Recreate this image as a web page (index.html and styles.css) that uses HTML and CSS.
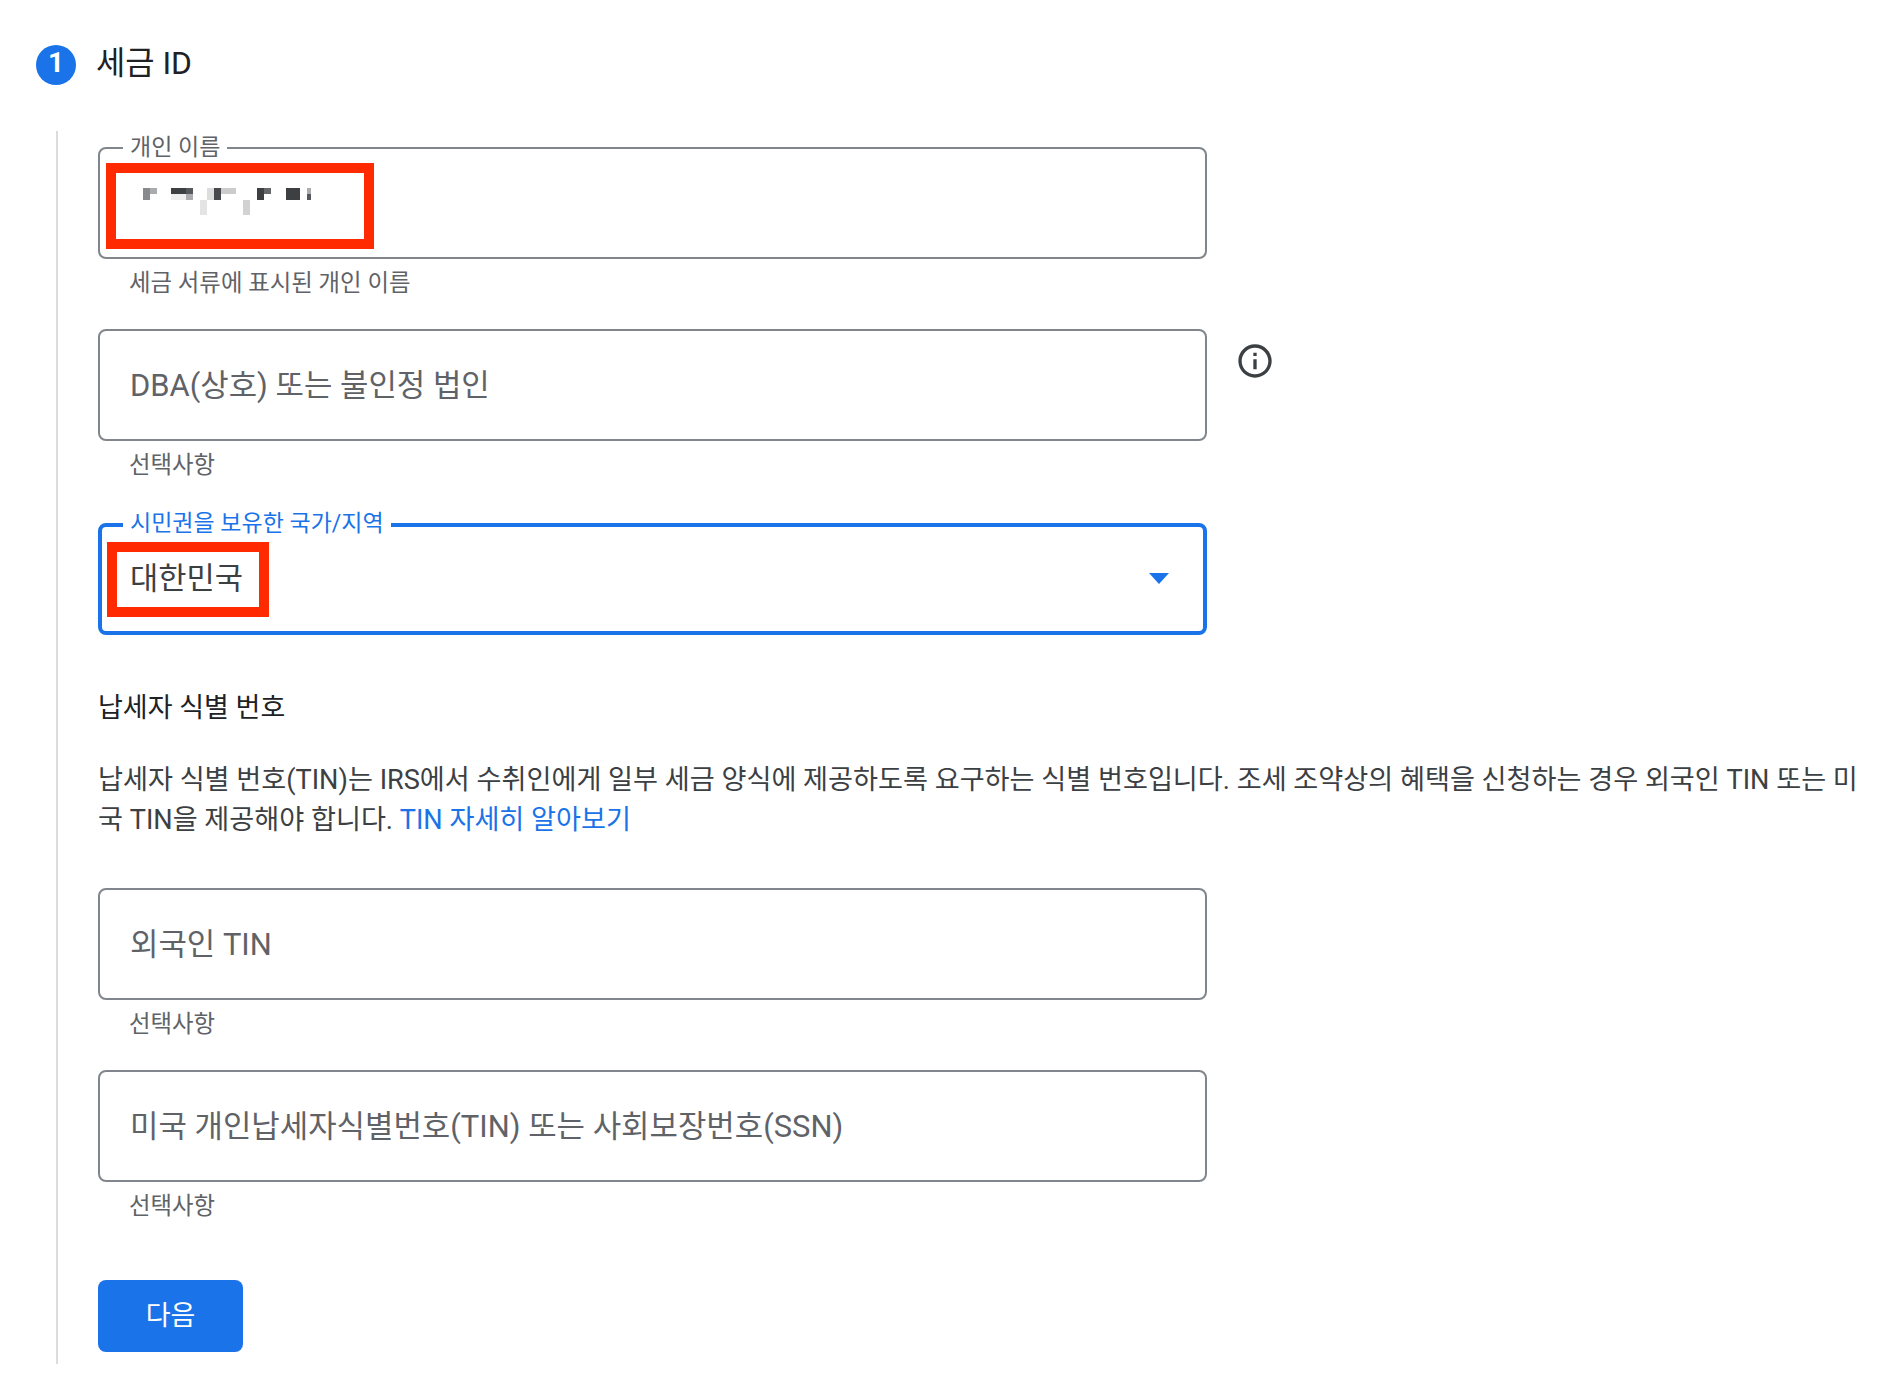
FILE: index.html
```html
<!DOCTYPE html>
<html lang="ko">
<head>
  <meta charset="UTF-8">
  <title>세금 ID</title>
  <link rel="stylesheet" href="styles.css">
</head>
<body>
  <div class="step-head">
    <span class="step-num">1</span>
    <h1>세금 ID</h1>
  </div>

  <div class="step-body">
    <div class="row row-first">
      <div class="field">
        <span class="float-label">개인 이름</span>
        <div class="redact redact-name">
          <svg class="pixels" width="170" height="30" viewBox="143 188 170 30">
            <rect x="143" y="188" width="7" height="12" fill="#888a8d"/>
            <rect x="150" y="188" width="7" height="6" fill="#a9abae"/>
            <rect x="171" y="188" width="15" height="6" fill="#3c4043"/>
            <rect x="186" y="188" width="7" height="6" fill="#55585c"/>
            <rect x="171" y="194" width="15" height="6" fill="#eeeeee"/>
            <rect x="186" y="194" width="7" height="6" fill="#aaacaf"/>
            <rect x="200" y="200" width="7" height="15" fill="#e4e4e4"/>
            <rect x="207" y="188" width="7" height="12" fill="#dddddd"/>
            <rect x="214" y="188" width="7" height="12" fill="#47494d"/>
            <rect x="221" y="188" width="15" height="6" fill="#cccccc"/>
            <rect x="243" y="200" width="7" height="15" fill="#d2d2d2"/>
            <rect x="257" y="188" width="7" height="12" fill="#3c4043"/>
            <rect x="264" y="188" width="7" height="6" fill="#66696c"/>
            <rect x="286" y="188" width="14" height="12" fill="#3c4043"/>
            <rect x="307" y="188" width="4" height="6" fill="#aaacaf"/>
            <rect x="307" y="194" width="4" height="6" fill="#55585c"/>
          </svg>
        </div>
      </div>
    </div>
    <div class="helper">세금 서류에 표시된 개인 이름</div>

    <div class="row">
      <div class="field">
        <span class="placeholder">DBA(상호) 또는 불인정 법인</span>
      </div>
      <svg class="info" width="40" height="40" viewBox="0 0 24 24">
        <path d="M11 7h2v2h-2zm0 4h2v6h-2zm1-9C6.48 2 2 6.48 2 12s4.480 10 10 10 10-4.480 10-10S17.520 2 12 2zm0 18c-4.410 0-8-3.590-8-8s3.590-8 8-8 8 3.590 8 8-3.590 8-8 8z"/>
      </svg>
    </div>
    <div class="helper helper-tall">선택사항</div>

    <div class="row">
      <div class="field field-focus">
        <span class="float-label">시민권을 보유한 국가/지역</span>
        <span class="value">대한민국</span>
        <div class="redact redact-country"></div>
        <span class="arrow"></span>
      </div>
    </div>

    <h2>납세자 식별 번호</h2>
    <p class="desc">납세자 식별 번호(TIN)는 IRS에서 수취인에게 일부 세금 양식에 제공하도록 요구하는 식별 번호입니다. 조세 조약상의 혜택을 신청하는 경우 외국인 TIN 또는 미국 TIN을 제공해야 합니다. <a href="#">TIN 자세히 알아보기</a></p>

    <div class="row">
      <div class="field">
        <span class="placeholder">외국인 TIN</span>
      </div>
    </div>
    <div class="helper">선택사항</div>

    <div class="row">
      <div class="field">
        <span class="placeholder">미국 개인납세자식별번호(TIN) 또는 사회보장번호(SSN)</span>
      </div>
    </div>
    <div class="helper">선택사항</div>

    <button class="next">다음</button>
  </div>
</body>
</html>
```

FILE: styles.css
```css
body { font-family: Roboto, "Noto Sans CJK KR", sans-serif; margin: 0; padding: 0; background: #fff; color: #3c4043; }

.step-head { display: flex; align-items: center; gap: 20px; height: 40px; margin-top: 45px; padding-left: 36px; }
.step-num { width: 40px; height: 40px; border-radius: 50%; background: #1a73e8; color: #fff; font-size: 28px; line-height: 36px; font-weight: 700; display: flex; justify-content: center; }
h1 { font-size: 31.8px; font-weight: 400; line-height: 32px; padding-bottom: 4px; color: #202124; margin: 0; }

.step-body { margin: 46px 0 0 56px; border-left: 2px solid #dadce0; padding: 16px 0 12px 40px; }

.row { display: flex; align-items: flex-start; gap: 28px; }
.field { position: relative; box-sizing: border-box; width: 1109px; height: 112px; border: 2px solid #80868b; border-radius: 8px; display: flex; align-items: center; padding-left: 30px; }
.field-focus { border: 4px solid #1a73e8; padding-left: 28px; }

.float-label { position: absolute; top: -15px; left: 23px; padding: 0 7px; background: #fff; font-size: 23px; line-height: 28px; color: #5f6368; white-space: nowrap; }
.field-focus .float-label { top: -17px; left: 21px; color: #1a73e8; }

.placeholder { font-size: 30.9px; color: #5f6368; padding-bottom: 6px; }
.value { font-size: 30.7px; color: #3c4043; padding-bottom: 7px; }
.helper { font-size: 23.4px; line-height: 28px; color: #5f6368; height: 70px; padding: 10px 0 0 31px; box-sizing: border-box; }
.helper-tall { height: 82px; }

.info { margin-top: 12px; fill: #3c4043; }

.arrow { position: absolute; right: 34px; top: 46px; border-left: 10px solid transparent; border-right: 10px solid transparent; border-top: 11px solid #1a73e8; }

.redact { position: absolute; box-sizing: border-box; border: 10px solid #ff2a00; }
.redact-name { left: 6px; top: 14px; width: 268px; height: 86px; }
.redact-country { left: 5px; top: 15px; width: 162px; height: 75px; }
.pixels { position: absolute; left: 27px; top: 15px; }

h2 { font-size: 27px; font-weight: 400; line-height: 40px; color: #202124; margin: 53px 0 0; }
.desc { font-size: 27.15px; line-height: 40px; color: #3c4043; margin: 32px 0 48px; width: 1770px; word-break: break-all; }
.desc a { color: #1a73e8; text-decoration: none; }

.next { display: block; width: 145px; height: 72px; margin: 28px 0 0; border: none; border-radius: 8px; background: #1a73e8; color: #fff; font-family: inherit; font-size: 27px; padding-bottom: 6px; }
```
